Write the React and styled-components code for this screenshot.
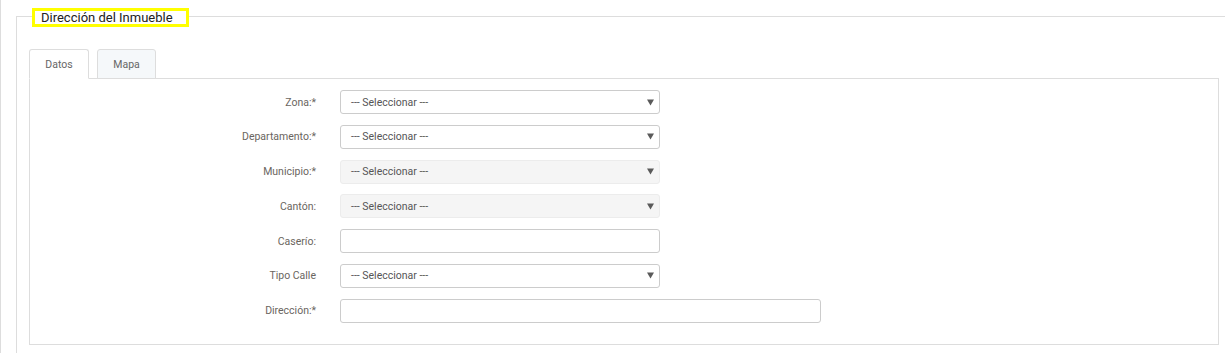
import React from "react";
import styled, { createGlobalStyle } from "styled-components";

const Global = createGlobalStyle`
  html, body { margin: 0; padding: 0; background: #fff; }
  body { font-family: Roboto, "Liberation Sans", Arial, sans-serif; }
  * { box-sizing: border-box; }
`;

const Page = styled.div`
  border-left: 1px solid #dddddd;
  padding: 16px 0 0 15px;
  height: 353px;
  overflow: hidden;
`;

const Section = styled.div`
  border-top: 1px solid #dddddd;
  border-left: 1px solid #dddddd;
  padding: 0 6px 0 12px;
  height: 100%;
`;

const Legend = styled.div`
  display: block;
  width: 157px;
  height: 19px;
  margin: -9px 0 0 3px;
  padding: 0 0 0 6px;
  border: 3px solid #ffff00;
  background: #fff;
  color: #222;
  font-size: 13px;
  line-height: 13px;
  font-weight: 400;
  white-space: nowrap;
`;

const TabBar = styled.div`
  display: flex;
  gap: 8px;
  margin-top: 22px;
  position: relative;
  z-index: 1;
`;

const Tab = styled.div`
  width: ${(p) => p.$w}px;
  height: 30px;
  border: 1px solid #dddddd;
  border-bottom: 1px solid ${(p) => (p.$active ? "#ffffff" : "#dddddd")};
  border-radius: 3px 3px 0 0;
  background: ${(p) => (p.$active ? "#ffffff" : "#f5f8fa")};
  color: #666;
  font-size: 10.5px;
  display: flex;
  align-items: center;
  justify-content: center;
`;

const Panel = styled.div`
  margin-top: -1px;
  border: 1px solid #dddddd;
  padding: 11px 0 21px 0;
  display: flex;
  flex-direction: column;
  gap: 10.8px;
`;

const Row = styled.div`
  display: flex;
  align-items: center;
  height: 24px;
`;

const Label = styled.label`
  width: 286px;
  margin-right: 24px;
  text-align: right;
  color: #6a6560;
  font-size: 10.5px;
`;

const Control = styled.div`
  width: ${(p) => p.$w}px;
  height: 24px;
  border: 1px solid ${(p) => (p.$disabled ? "#ececec" : "#cccccc")};
  border-radius: 3px;
  background: ${(p) => (p.$disabled ? "#f5f5f5" : "#ffffff")};
  display: flex;
  align-items: center;
  justify-content: space-between;
  padding: 0 5px 0 10px;
  color: #555;
  font-size: 10.5px;
`;

const Arrow = styled.svg`
  width: 7px;
  height: 7px;
  display: block;
`;

const Caret = () => (
  <Arrow viewBox="0 0 7 7">
    <path d="M0 0.5 H7 L3.5 6.5 Z" fill="#5a5a5a" />
  </Arrow>
);

const rows = [
  { label: "Zona:*", type: "select" },
  { label: "Departamento:*", type: "select" },
  { label: "Municipio:*", type: "select", disabled: true },
  { label: "Cantón:", type: "select", disabled: true },
  { label: "Caserío:", type: "input" },
  { label: "Tipo Calle", type: "select" },
  { label: "Dirección:*", type: "input", w: 481 },
];

export default function App() {
  return (
    <>
      <Global />
      <Page>
        <Section>
          <Legend>Dirección del Inmueble</Legend>
          <TabBar>
            <Tab $active $w={60}>Datos</Tab>
            <Tab $w={59}>Mapa</Tab>
          </TabBar>
          <Panel>
            {rows.map((r) => (
              <Row key={r.label}>
                <Label>{r.label}</Label>
                <Control $w={r.w || 320} $disabled={r.disabled}>
                  {r.type === "select" && (
                    <>
                      <span>--- Seleccionar ---</span>
                      <Caret />
                    </>
                  )}
                </Control>
              </Row>
            ))}
          </Panel>
        </Section>
      </Page>
    </>
  );
}
